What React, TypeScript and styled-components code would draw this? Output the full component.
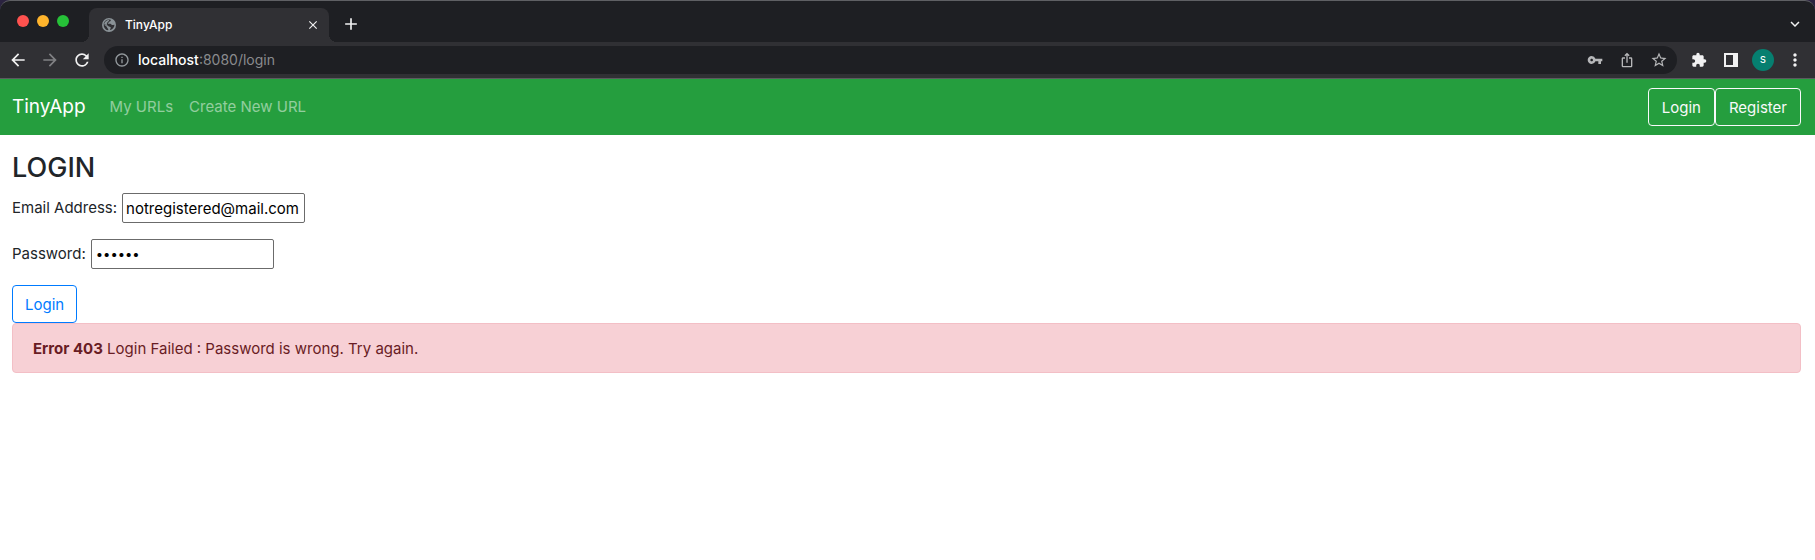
import React from 'react';
import styled, { createGlobalStyle } from 'styled-components';
import {
  MdAdd, MdArrowBack, MdArrowForward, MdClose, MdExpandMore, MdExtension, MdInfoOutline,
  MdIosShare, MdMoreVert, MdRefresh, MdStarBorder, MdVpnKey,
} from 'react-icons/md';

const GlobalStyle = createGlobalStyle`
  *, *::before, *::after { box-sizing: border-box; }
  body {
    margin: 0;
    background: #fff;
    color: #212529;
    font: 15px/24px Inter, "Liberation Sans", sans-serif;
  }
  button, input { font: inherit; }
`;

const Desktop = styled.div`
  background: #2b2340;
`;

const Browser = styled.header`
  background: #1e1f23;
  border-top: 1px solid #5f6064;
  border-bottom: 1px solid #5b5b5f;
  border-radius: 10px 10px 0 0;
`;

const TabStrip = styled.div`
  display: flex;
  height: 41px;
  padding: 7px 4px 0 17px;
`;

const Lights = styled.div`
  display: flex;
  gap: 8px;
  padding-top: 7px;
  margin-right: 20px;
`;

const Light = styled.span<{ $color: string }>`
  width: 12px;
  height: 12px;
  border-radius: 50%;
  background: ${(p) => p.$color};
`;

const Tab = styled.div`
  position: relative;
  display: flex;
  align-items: center;
  width: 240px;
  padding: 0 8px 0 13px;
  gap: 9px;
  border-radius: 8px 8px 0 0;
  background: #303034;
  color: #fff;
  font-size: 12px;
  font-weight: 500;

  &::before, &::after {
    content: '';
    position: absolute;
    bottom: 0;
    width: 8px;
    height: 8px;
  }
  &::before {
    right: 100%;
    background: radial-gradient(circle at 0 0, transparent 8px, #303034 8px);
  }
  &::after {
    left: 100%;
    background: radial-gradient(circle at 100% 0, transparent 8px, #303034 8px);
  }
`;

const TabTitle = styled.span`
  flex: 1;
`;

const IconButton = styled.button<{ $width?: number; $color?: string }>`
  display: flex;
  flex: none;
  align-items: center;
  justify-content: center;
  width: ${(p) => p.$width ?? 32}px;
  height: 32px;
  padding: 0;
  border: 0;
  background: none;
  color: ${(p) => p.$color ?? '#f1f1f2'};
`;

const NewTab = styled(IconButton)`
  margin-left: 6px;
`;

const TabSearch = styled(IconButton)`
  margin-left: auto;
`;

const Toolbar = styled.div`
  display: flex;
  align-items: center;
  height: 36px;
  padding: 0 4px 0 2px;
  background: #303034;
`;

const AddressBar = styled.div`
  display: flex;
  flex: 1;
  align-items: center;
  height: 28px;
  margin: 0 6px;
  padding: 0 2px;
  border-radius: 14px;
  background: #1e1f23;
`;

const Address = styled.span`
  flex: 1;
  color: #8a8b8e;
  font-size: 14px;
  line-height: 20px;
  b { color: #fff; font-weight: 500; }
`;

const Avatar = styled.span`
  width: 22px;
  height: 22px;
  border-radius: 50%;
  background: #067f70;
  color: #fff;
  font-size: 9px;
  font-weight: 500;
  line-height: 22px;
  text-align: center;
`;

const Navbar = styled.nav`
  display: flex;
  align-items: center;
  min-height: 56px;
  padding: 8px 14px 8px 12px;
  background: #259e3e;
`;

const Brand = styled.a`
  margin-right: 24px;
  color: #fff;
  font-size: 19px;
  line-height: 26px;
  text-decoration: none;
`;

const NavLinks = styled.div`
  display: flex;
  flex: 1;
  gap: 16px;
`;

const NavLink = styled.a`
  color: rgba(255, 255, 255, 0.5);
  line-height: 26px;
  text-decoration: none;
`;

const OutlineButton = styled.button<{ $color: string }>`
  display: block;
  height: 38px;
  padding: 1px 12px 0;
  border: 1px solid ${(p) => p.$color};
  border-radius: 4px;
  background: transparent;
  color: ${(p) => p.$color};
`;

const NavButton = styled(OutlineButton)`
  padding: 1px 13px 0;
`;

const Page = styled.main`
  padding: 16px 14px 16px 12px;
`;

const Title = styled.h1`
  margin: 0 0 8px;
  font-size: 27px;
  font-weight: 500;
  line-height: 34px;
`;

const Field = styled.div`
  display: flex;
  align-items: center;
  gap: 5px;
  margin-bottom: 16px;
`;

const TextInput = styled.input`
  width: 183px;
  height: 30px;
  padding: 1px 3px;
  border: 1px solid #6b6b6b;
  border-radius: 2px;
  background: #fff;
  color: #000;
  outline: 0;

  &[type='password'] {
    padding: 1px 4px;
    font-size: 13px;
  }
`;

const Alert = styled.div`
  padding: 13px 20px 11px;
  border: 1px solid #f3bfc6;
  border-radius: 4px;
  background: #f7d0d5;
  color: #691c24;
`;

const GlobeIcon = () => (
  <svg width="14" height="14" viewBox="0 0 14 14">
    <circle cx="7" cy="7" r="7" fill="#899196" />
    <path
      fill="#303034"
      d="M8.6 1.7c.5.9-.1 1.6-1 1.9-.7.2-.5 1-1.2 1.2-.7.2-.7.8-.2 1h2.2c.9 0 .9 1.3 1.8 1.3.8 0 1.5-.6 2.3-.3-.1 2.400-1.700 4.700-4.200 5.300-.6-.6-.1-1.300.4-1.800.3-.7-.2-1.400-1-1.500C6.200 8.700 6.200 7.300 5 7.200L1.700 6.700C1.500 9.400 3.300 11.800 6 12.300c.5-.7.400-1.300-.2-1.800-.8-.5-.6-1.500-1.300-2L1.600 6.300C2 3.600 4.200 1.600 7 1.600z"
    />
    <path fill="#899196" d="M2 6.200C2.500 3.800 4.500 2 7 2c.5.700-.2 1.200-.8 1.500-.4.300-.2.900-.9 1.100-.8.300-.4 1.200 0 1.500L4.500 6.900z" />
  </svg>
);

const SidePanelIcon = () => (
  <svg width="14" height="14" viewBox="0 0 14 14">
    <path fill="currentColor" fillRule="evenodd" d="M0 0h14v14H0zM2 2v10h7V2z" />
  </svg>
);

export default function App() {
  return (
    <>
      <GlobalStyle />
      <Desktop>
        <Browser>
          <TabStrip>
            <Lights>
              <Light $color="#ff524f" />
              <Light $color="#ffb42c" />
              <Light $color="#26c138" />
            </Lights>
            <Tab>
              <GlobeIcon />
              <TabTitle>TinyApp</TabTitle>
              <IconButton $width={16} aria-label="Close tab"><MdClose size={14} /></IconButton>
            </Tab>
            <NewTab aria-label="New tab"><MdAdd size={20} /></NewTab>
            <TabSearch aria-label="Search tabs"><MdExpandMore size={18} /></TabSearch>
          </TabStrip>
          <Toolbar>
            <IconButton aria-label="Back"><MdArrowBack size={20} /></IconButton>
            <IconButton $color="#808184" aria-label="Forward"><MdArrowForward size={20} /></IconButton>
            <IconButton aria-label="Reload"><MdRefresh size={20} /></IconButton>
            <AddressBar>
              <IconButton $color="#93999d" aria-label="Site information"><MdInfoOutline size={16} /></IconButton>
              <Address><b>localhost</b>:8080/login</Address>
              <IconButton $color="#b6b7b9" aria-label="Passwords"><MdVpnKey size={16} /></IconButton>
              <IconButton $color="#b6b7b9" aria-label="Share"><MdIosShare size={16} /></IconButton>
              <IconButton $color="#b6b7b9" aria-label="Bookmark"><MdStarBorder size={18} /></IconButton>
            </AddressBar>
            <IconButton aria-label="Extensions"><MdExtension size={16} /></IconButton>
            <IconButton aria-label="Side panel"><SidePanelIcon /></IconButton>
            <IconButton aria-label="Profile"><Avatar>S</Avatar></IconButton>
            <IconButton aria-label="Menu"><MdMoreVert size={20} /></IconButton>
          </Toolbar>
        </Browser>
      </Desktop>
      <Navbar>
        <Brand href="#">TinyApp</Brand>
        <NavLinks>
          <NavLink href="#">My URLs</NavLink>
          <NavLink href="#">Create New URL</NavLink>
        </NavLinks>
        <NavButton $color="#f8f9fa">Login</NavButton>
        <NavButton $color="#f8f9fa">Register</NavButton>
      </Navbar>
      <Page>
        <Title>LOGIN</Title>
        <form onSubmit={(e) => e.preventDefault()}>
          <Field>
            <label htmlFor="email">Email Address:</label>
            <TextInput id="email" type="email" defaultValue="notregistered@mail.com" />
          </Field>
          <Field>
            <label htmlFor="password">Password:</label>
            <TextInput id="password" type="password" defaultValue="secret" />
          </Field>
          <OutlineButton $color="#007bff">Login</OutlineButton>
        </form>
        <Alert role="alert"><strong>Error 403</strong> Login Failed : Password is wrong. Try again.</Alert>
      </Page>
    </>
  );
}
